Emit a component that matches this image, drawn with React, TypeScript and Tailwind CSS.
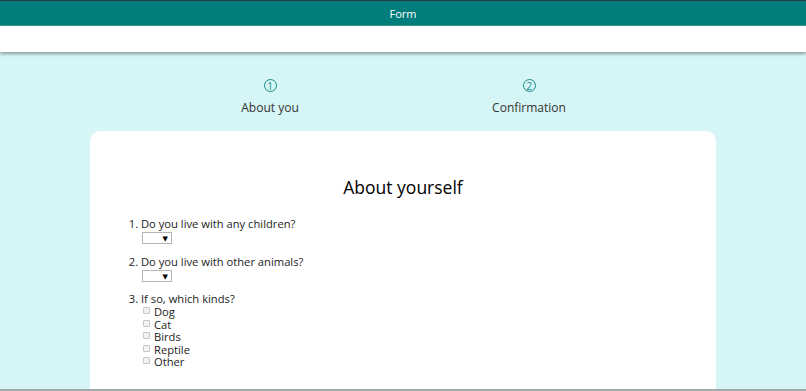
import React from 'react'

const font = { fontFamily: '"Open Sans", "DejaVu Sans", sans-serif' }

function Step({ n, label }: { n: number; label: string }) {
    return (
        <div className="w-[130px] flex flex-col items-center">
            <span className="w-[13px] h-[13px] rounded-full border border-[#1a8c85] text-[#1a8c85] text-[10px] leading-none flex items-center justify-center">
                {n}
            </span>
            <span className="mt-[7px] text-[12px] text-[#333]">{label}</span>
        </div>
    )
}

function FakeSelect() {
    return (
        <div className="ml-[1px] mt-[1px] w-[30px] h-[12px] border border-[#b5b5b5] bg-white flex items-center justify-end pr-[3px]">
            <span className="text-[7px] leading-none text-black">▼</span>
        </div>
    )
}

const kinds = ['Dog', 'Cat', 'Birds', 'Reptile', 'Other']

export default function App() {
    return (
        <div className="h-[391px] overflow-hidden bg-[#d6f5f6] border-b-2 border-[#a3abab] flex flex-col" style={font}>
            <header className="h-[26px] bg-[#017d7b] border-t border-[#1f3b40] border-b border-b-[#3a9a96] flex items-center justify-center pt-[2px]">
                <span className="text-white text-[11px]">Form</span>
            </header>
            <div className="h-[26px] bg-white shadow-[0_2px_3px_rgba(0,0,0,0.35)]" />

            <div className="flex pl-[205px] gap-[129px] pt-[27px]">
                <Step n={1} label="About you" />
                <Step n={2} label="Confirmation" />
            </div>

            <main className="mx-[90px] mt-[14px] flex-1 bg-white rounded-t-[10px]">
                <h1 className="text-center text-[17.5px] leading-[24px] text-black mt-[44px]">About yourself</h1>

                <ol className="list-decimal pl-[51px] mt-[18px] text-[11.2px] leading-[14px] text-[#222]">
                    <li className="mb-[11px]">
                        <div>Do you live with any children?</div>
                        <FakeSelect />
                    </li>
                    <li className="mb-[10px]">
                        <div>Do you live with other animals?</div>
                        <FakeSelect />
                    </li>
                    <li>
                        <div>If so, which kinds?</div>
                        <div className="flex flex-col">
                            {kinds.map(k => (
                                <label key={k} className="flex items-center h-[12.5px] leading-[12.5px] pl-[2px]">
                                    <span className="w-[7px] h-[7px] border border-[#c8c8c8] bg-[#f2f2f2] rounded-[1px] mr-[4px] -mt-[3px]" />
                                    <span>{k}</span>
                                </label>
                            ))}
                        </div>
                    </li>
                </ol>
            </main>
        </div>
    )
}
